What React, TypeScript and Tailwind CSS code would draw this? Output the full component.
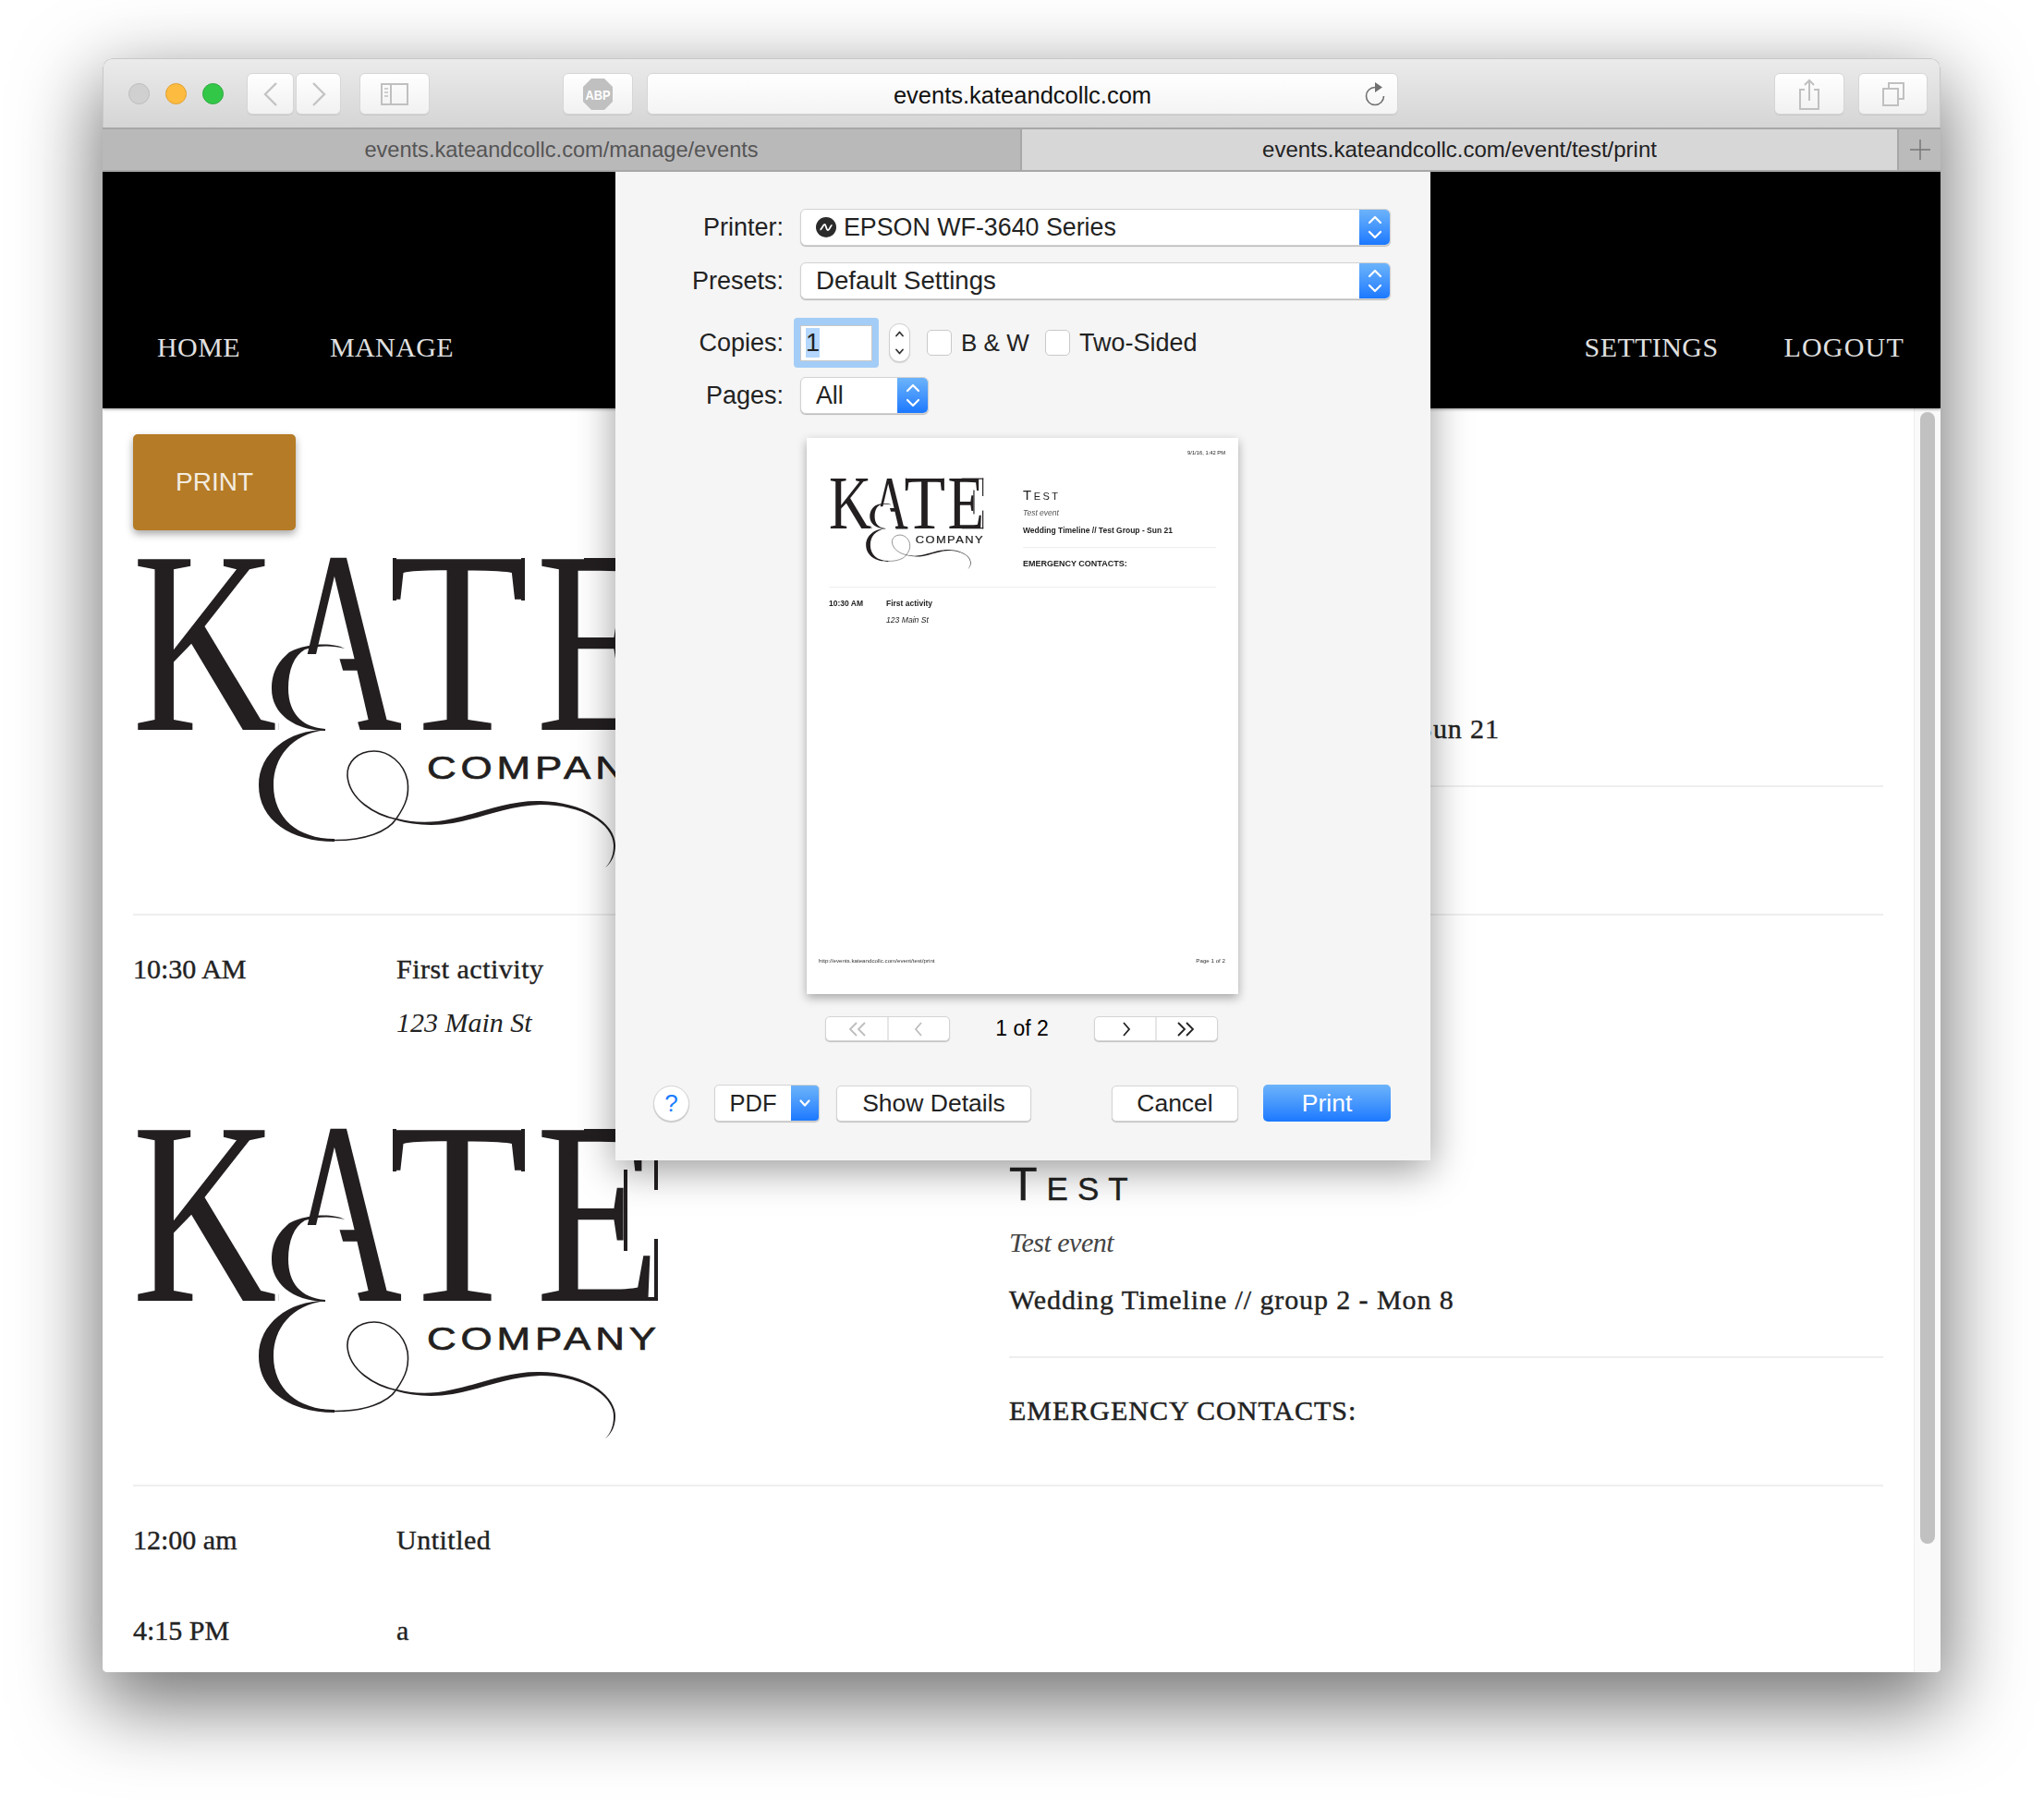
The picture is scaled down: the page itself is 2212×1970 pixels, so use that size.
import React from "react";

const Logo = ({ width, height }: { width: number; height: number }) => (
  <svg width={width} height={height} viewBox="144 602 570 340" className="block shrink-0" fill="#231f20">
    <g fontFamily="'Liberation Serif', serif" fontSize="282">
      <text transform="translate(143 790) scale(0.77 1)">K</text>
      <text transform="translate(300 790) scale(0.665 1)">A</text>
      <text transform="translate(421 790) scale(0.86 1)">T</text>
      <text transform="translate(580 790) scale(0.78 1)">E</text>
    </g>
    <rect x="425" y="604" width="4" height="46" />
    <rect x="564" y="604" width="4" height="46" />
    <rect x="632" y="604" width="80" height="4" />
    <rect x="632" y="786" width="80" height="4" />
    <rect x="675" y="648" width="4" height="88" />
    <rect x="708" y="604" width="4" height="66" />
    <rect x="708" y="723" width="4" height="67" />
    <polygon points="302,708 366,708 391,795 302,795" fill="#ffffff" />
    <path d="M373 702C362 696 335 695 313 706C303 715 294 725 294 746C294 770 315 790 352 791L352 789C325 787 312 770 312 745C312 725 318 710 330 703C345 698 362 699 373 702Z" />
    <path d="M352 790C312 790 280 815 280 850C280 888 315 911 362 911L362 908C322 908 296 885 296 850C296 820 315 795 352 790Z" />
    <path d="M360 909.5C395 910 420 900 429 886C440 870 443 860 441 845C437 825 420 813 405 813C387 813 375 825 376 840C378 865 405 882 430 887" fill="none" stroke="#231f20" strokeWidth="1.6" />
    <path d="M430 886C445 890 465 892 490 886C520 880 550 866 585 867C630 868 666 890 666 915C666 925 662 934 655 939C661 933 664 925 664 915C664 892 630 871 585 871C550 872 520 886 490 891C465 895 445 892 430 888Z" />
    <text transform="translate(462 843) scale(1.22 1)" fontFamily="'Liberation Sans', sans-serif" fontSize="36" letterSpacing="4" stroke="#231f20" strokeWidth="0.7">COMPANY</text>
  </svg>
);

const Section = ({ group, rows, padBottom }: { group: string; rows: React.ReactNode; padBottom: string }) => (
  <section className={padBottom}>
    <div className="flex h-[389px] border-b-2 border-[#eeeeee]">
      <div className="w-[948px] shrink-0">
        <Logo width={570} height={340} />
      </div>
      <div className="flex-1">
        <h2 className="mt-[37px] h-[50px] text-[50px] leading-[50px] tracking-[10px] [font-variant:small-caps] [-webkit-text-stroke:0.4px_#222] [font-family:'Liberation_Sans',sans-serif] text-[#222]">Test</h2>
        <p className="mt-[18px] h-[40px] text-[30px] leading-[40px] italic tracking-[-0.5px] text-[#444]">Test event</p>
        <p className="mt-[22px] h-[40px] text-[30px] leading-[40px] tracking-[0.9px] [-webkit-text-stroke:0.4px_#222]">{group}</p>
        <div className="mt-[41px] h-[2px] bg-[#eeeeee]" />
        <p className="mt-[37px] h-[40px] text-[30px] leading-[40px] tracking-[1px] [-webkit-text-stroke:0.5px_#222]">EMERGENCY CONTACTS:</p>
      </div>
    </div>
    {rows}
  </section>
);

const Row = ({ time, title, className }: { time: string; title: string; className: string }) => (
  <div className={`flex h-[40px] text-[30px] leading-[40px] [-webkit-text-stroke:0.4px_#222] ${className}`}>
    <div className="w-[285px] shrink-0">{time}</div>
    <div className="tracking-[0.5px]">{title}</div>
  </div>
);

const Stepper = () => (
  <svg width="16" height="30" viewBox="0 0 16 30" fill="none" stroke="#fff" strokeWidth="2.2" strokeLinecap="round" strokeLinejoin="round">
    <path d="M2 10L8 4L14 10" />
    <path d="M2 20L8 26L14 20" />
  </svg>
);

const Popup = ({ children, className }: { children: React.ReactNode; className: string }) => (
  <div className={`flex h-[40px] items-stretch overflow-hidden rounded-[6px] border border-[#d2d2d2] bg-white shadow-[0_1px_1px_rgba(0,0,0,0.25)] ${className}`}>
    <div className="flex flex-1 items-center gap-[8px] pl-[16px]">{children}</div>
    <div className="flex w-[33px] items-center justify-center bg-gradient-to-b from-[#6cb3fa] to-[#1a78ff]">
      <Stepper />
    </div>
  </div>
);

const Label = ({ children }: { children: string }) => (
  <div className="w-[182px] shrink-0 text-right text-[27px]">{children}</div>
);

const Btn = ({ children, className }: { children: string; className: string }) => (
  <div className={`flex h-[39px] items-center justify-center rounded-[5px] border border-[#d4d4d4] bg-white text-[26.5px] shadow-[0_1px_1px_rgba(0,0,0,0.22)] ${className}`}>
    {children}
  </div>
);

const ToolBtn = ({ children, className }: { children: React.ReactNode; className: string }) => (
  <div className={`flex h-[45px] items-center justify-center rounded-[6px] border border-[#d6d6d6] bg-gradient-to-b from-[#ffffff] to-[#f1f1f1] shadow-[0_1px_0_rgba(0,0,0,0.08)] ${className}`}>
    {children}
  </div>
);

const Chev = ({ d, color }: { d: string; color: string }) => (
  <svg width="34" height="20" viewBox="0 0 34 20" fill="none" stroke={color} strokeWidth="1.8">
    <path d={d} />
  </svg>
);

const MiniPage = () => (
  <div className="ml-[207px] mt-[26px] flex h-[602px] w-[467px] flex-col bg-white pt-[12px] text-[#222] shadow-[0_4px_10px_rgba(0,0,0,0.32)] blur-[0.3px]">
    <div className="h-[8px] pr-[14px] text-right text-[5.8px] leading-[8px] [font-family:'Liberation_Sans',sans-serif]">9/1/16, 1:42 PM</div>
    <div className="ml-[24px] mr-[24px] mt-[23px] flex h-[119px] border-b border-[#eeeeee]">
      <Logo width={168} height={100} />
      <div className="ml-[42px] flex-1">
        <div className="mt-[12px] h-[14px] text-[15px] leading-[14px] tracking-[2.5px] [font-variant:small-caps] [font-family:'Liberation_Sans',sans-serif]">Test</div>
        <div className="mt-[6px] h-[12px] text-[8.5px] leading-[12px] italic text-[#555]">Test event</div>
        <div className="mt-[7px] h-[12px] text-[8.5px] font-bold leading-[12px]">Wedding Timeline // Test Group - Sun 21</div>
        <div className="mt-[12px] h-px bg-[#eeeeee]" />
        <div className="mt-[11px] h-[12px] text-[9px] font-bold leading-[12px]">EMERGENCY CONTACTS:</div>
      </div>
    </div>
    <div className="ml-[24px] mt-[11px] flex h-[12px] text-[8.5px] font-bold leading-[12px]">
      <div className="w-[62px]">10:30 AM</div>
      <div>First activity</div>
    </div>
    <div className="ml-[86px] mt-[6px] h-[12px] text-[8.6px] italic leading-[12px]">123 Main St</div>
    <div className="mb-[32px] mt-auto flex h-[8px] justify-between pl-[13px] pr-[14px] text-[6.2px] leading-[8px] text-[#333] [font-family:'Liberation_Sans',sans-serif]">
      <span>http://events.kateandcollc.com/event/test/print</span>
      <span>Page 1 of 2</span>
    </div>
  </div>
);

const Dialog = () => (
  <div className="absolute left-[555px] top-0 z-20 h-[1070px] w-[882px] bg-[#f5f5f5] pt-[40px] text-[26.8px] leading-[40px] text-[#222] shadow-[0_10px_40px_rgba(0,0,0,0.4)] [font-family:'Liberation_Sans',sans-serif]">
    <div className="flex h-[40px] items-center">
      <Label>Printer:</Label>
      <Popup className="ml-[18px] w-[639px]">
        <svg width="22" height="22" viewBox="0 0 22 22">
          <circle cx="11" cy="11" r="11" fill="#2b2b2b" />
          <path d="M4.5 13.5C6.5 13.5 7.5 8 9.5 8C11 8 11 14 13 14C15 14 15.5 9 17.5 8.5" fill="none" stroke="#fff" strokeWidth="1.8" />
        </svg>
        <span>EPSON WF-3640 Series</span>
      </Popup>
    </div>
    <div className="mt-[18px] flex h-[40px] items-center">
      <Label>Presets:</Label>
      <Popup className="ml-[18px] w-[639px]">
        <span className="text-[27.6px]">Default Settings</span>
      </Popup>
    </div>
    <div className="mt-[20px] flex h-[54px] items-center">
      <Label>Copies:</Label>
      <div className="ml-[11px] flex h-[54px] w-[92px] items-center justify-center rounded-[4px] bg-[#a3cdf7]">
        <div className="flex h-[39px] w-[78px] items-center border border-[#c8c8c8] bg-white pl-[5px] text-[27px]">
          <span className="bg-[#b3d7ff] leading-[32px]">1</span>
        </div>
      </div>
      <div className="ml-[11px] flex h-[42px] w-[23px] items-center justify-center rounded-[11px] border border-[#cfcfcf] bg-white shadow-[0_1px_1px_rgba(0,0,0,0.15)]">
        <svg width="13" height="28" viewBox="0 0 13 28" fill="none" stroke="#333" strokeWidth="1.8" strokeLinecap="round" strokeLinejoin="round">
          <path d="M3 6.5L6.5 2.5L10 6.5" />
          <path d="M3 21.5L6.5 25.5L10 21.5" />
        </svg>
      </div>
      <div className="ml-[18px] h-[28px] w-[27px] rounded-[5px] border border-[#c9c9c9] bg-white" />
      <span className="ml-[10px] w-[91px] shrink-0 text-[26px]">B &amp; W</span>
      <div className="h-[28px] w-[27px] rounded-[5px] border border-[#c9c9c9] bg-white" />
      <span className="ml-[10px] text-[27px]">Two-Sided</span>
    </div>
    <div className="mt-[10px] flex h-[40px] items-center">
      <Label>Pages:</Label>
      <Popup className="ml-[18px] w-[139px]">
        <span>All</span>
      </Popup>
    </div>
    <MiniPage />
    <div className="mt-[24px] flex h-[27px] items-center pl-[227px]">
      <div className="flex h-[27px] w-[135px] rounded-[5px] border border-[#d4d4d4] bg-white shadow-[0_1px_1px_rgba(0,0,0,0.22)]">
        <div className="flex flex-1 items-center justify-center border-r-2 border-[#e6e6e6]">
          <Chev d="M17 3L10 10L17 17M26 3L19 10L26 17" color="#bdbdbd" />
        </div>
        <div className="flex flex-1 items-center justify-center">
          <Chev d="M20 3L14 10L20 17" color="#bdbdbd" />
        </div>
      </div>
      <div className="w-[156px] text-center text-[23px] leading-[27px] text-black">1 of 2</div>
      <div className="flex h-[27px] w-[134px] rounded-[5px] border border-[#d4d4d4] bg-white shadow-[0_1px_1px_rgba(0,0,0,0.22)]">
        <div className="flex flex-1 items-center justify-center border-r-2 border-[#e6e6e6]">
          <Chev d="M15 3L21 10L15 17" color="#222" />
        </div>
        <div className="flex flex-1 items-center justify-center">
          <Chev d="M7 3L14 10L7 17M16 3L23 10L16 17" color="#222" />
        </div>
      </div>
    </div>
    <div className="mt-[47px] flex h-[40px] items-center pl-[41px]">
      <div className="flex h-[39px] w-[39px] items-center justify-center rounded-full border border-[#d4d4d4] bg-white text-[26px] text-[#1a7cff] shadow-[0_1px_1px_rgba(0,0,0,0.22)]">?</div>
      <div className="ml-[27px] flex h-[40px] w-[114px] overflow-hidden rounded-[5px] border border-[#d4d4d4] bg-white text-[25.5px] shadow-[0_1px_1px_rgba(0,0,0,0.22)]">
        <div className="flex w-[82px] items-center justify-center">PDF</div>
        <div className="flex flex-1 items-center justify-center bg-gradient-to-b from-[#6cb3fa] to-[#1a78ff]">
          <svg width="14" height="10" viewBox="0 0 14 10" fill="none" stroke="#fff" strokeWidth="2.2" strokeLinecap="round" strokeLinejoin="round">
            <path d="M2.5 2.5L7 7.5L11.5 2.5" />
          </svg>
        </div>
      </div>
      <Btn className="ml-[18px] w-[211px]">Show Details</Btn>
      <Btn className="ml-[87px] w-[137px]">Cancel</Btn>
      <div className="ml-[27px] flex h-[40px] w-[138px] items-center justify-center rounded-[5px] bg-gradient-to-b from-[#6cb3fa] to-[#1a78ff] text-[26.5px] text-white">Print</div>
    </div>
  </div>
);

export default function App() {
  return (
    <div className="h-[1970px] w-[2212px] overflow-hidden bg-white pl-[111px] pt-[63px]">
      <div className="flex h-[1747px] w-[1989px] flex-col overflow-hidden rounded-t-[10px] rounded-b-[5px] shadow-[0_30px_85px_6px_rgba(0,0,0,0.55)]">
        {/* toolbar */}
        <div className="flex h-[75px] shrink-0 items-start rounded-t-[10px] border-x border-t border-[#c8c8c8] bg-gradient-to-b from-[#ebebeb] to-[#d6d5d6] pl-[27px] pt-[15px]">
          <div className="mt-[11px] h-[23px] w-[23px] rounded-full border border-[#bdbdbd] bg-[#d0d0d0]" />
          <div className="ml-[17px] mt-[11px] h-[23px] w-[23px] rounded-full border border-[#e0a030] bg-[#fdbb40]" />
          <div className="ml-[17px] mt-[11px] h-[23px] w-[23px] rounded-full border border-[#2cab3e] bg-[#33c748]" />
          <ToolBtn className="ml-[25px] w-[51px]">
            <svg width="18" height="28" viewBox="0 0 18 28" fill="none" stroke="#c4c4c4" strokeWidth="2.4"><path d="M15 2L3 14L15 26" /></svg>
          </ToolBtn>
          <ToolBtn className="ml-[2px] w-[49px]">
            <svg width="18" height="28" viewBox="0 0 18 28" fill="none" stroke="#c4c4c4" strokeWidth="2.4"><path d="M3 2L15 14L3 26" /></svg>
          </ToolBtn>
          <ToolBtn className="ml-[20px] w-[76px]">
            <svg width="30" height="24" viewBox="0 0 30 24" fill="none" stroke="#c0c0c0" strokeWidth="2">
              <rect x="1" y="1" width="28" height="22" />
              <path d="M11 1V23" />
              <path d="M4 6H8M4 10H8M4 14H8" strokeWidth="1.5" />
            </svg>
          </ToolBtn>
          <ToolBtn className="ml-[144px] w-[76px]">
            <svg width="34" height="36" viewBox="0 0 34 36">
              <polygon points="10,1 24,1 33,10 33,26 24,35 10,35 1,26 1,10" fill="#c0c0c0" />
              <text x="17" y="24" textAnchor="middle" fill="#fff" fontSize="15" fontWeight="700" fontFamily="'Liberation Sans', sans-serif" textLength="27" lengthAdjust="spacingAndGlyphs">ABP</text>
            </svg>
          </ToolBtn>
          <div className="relative ml-[15px] flex h-[45px] w-[813px] items-center justify-center rounded-[6px] border border-[#d6d6d6] bg-gradient-to-b from-[#ffffff] to-[#f4f4f4] pt-[3px] text-[25.5px] text-[#111] shadow-[0_1px_0_rgba(0,0,0,0.08)] [font-family:'Liberation_Sans',sans-serif]">
            events.kateandcollc.com
            <svg className="absolute right-[12px] top-[8px]" width="24" height="28" viewBox="0 0 24 28" fill="none">
              <path d="M12 6.5A9.5 9.5 0 1 0 21.5 16" stroke="#707070" strokeWidth="1.6" />
              <path d="M12 1L20 6.5L12 12Z" fill="#707070" />
            </svg>
          </div>
          <ToolBtn className="ml-[407px] w-[76px]">
            <svg width="22" height="34" viewBox="0 0 22 34" fill="none" stroke="#c0c0c0" strokeWidth="2">
              <path d="M6 12H1V33H21V12H16" />
              <path d="M11 24V2M6 7L11 2L16 7" />
            </svg>
          </ToolBtn>
          <ToolBtn className="ml-[15px] w-[75px]">
            <svg width="24" height="26" viewBox="0 0 24 26" fill="none" stroke="#c0c0c0" strokeWidth="2">
              <rect x="1" y="7" width="16" height="18" />
              <path d="M7 7V1H23V18H17" />
            </svg>
          </ToolBtn>
        </div>
        {/* tabs */}
        <div className="flex h-[48px] shrink-0 border-y-2 border-[#a8a7a8] text-[24px] leading-[44px] [font-family:'Liberation_Sans',sans-serif]">
          <div className="w-[993px] bg-[#bab9ba] text-center text-[23.6px] text-[#555]">events.kateandcollc.com/manage/events</div>
          <div className="flex-1 border-l-2 border-[#a8a7a8] bg-[#d8d7d8] text-center text-[#222]">events.kateandcollc.com/event/test/print</div>
          <div className="flex w-[47px] items-center justify-center border-l-2 border-[#a8a7a8] bg-[#bcbbbc]">
            <svg width="22" height="22" viewBox="0 0 22 22" stroke="#777" strokeWidth="1.5"><path d="M11 0V22M0 11H22" /></svg>
          </div>
        </div>
        {/* page */}
        <div className="relative flex min-h-0 flex-1 flex-col overflow-hidden bg-white [font-family:'Liberation_Serif',serif] text-[#222]">
          <header className="relative z-10 flex h-[256px] shrink-0 items-start bg-black pt-[170px] text-[30px] leading-[40px] tracking-[0.4px] text-[#e0e0e0] shadow-[0_1px_3px_rgba(0,0,0,0.4)]">
            <span className="ml-[59px]">HOME</span>
            <span className="ml-[97px]">MANAGE</span>
            <span className="ml-auto">SETTINGS</span>
            <span className="ml-[71px] mr-[39px] tracking-[1.2px]">LOGOUT</span>
          </header>
          <div className="flex min-h-0 flex-1">
            <main className="min-w-0 flex-1 pl-[33px] pr-[33px] pt-[28px]">
              <div className="flex h-[104px] w-[176px] items-center justify-center rounded-[5px] bg-[#b57b26] text-[28px] text-[#f3ece0] shadow-[0_4px_8px_rgba(0,0,0,0.35)] [font-family:'Liberation_Sans',sans-serif]">PRINT</div>
              <div className="mt-[28px]">
                <Section
                  group="Wedding Timeline // Test Group - Sun 21"
                  padBottom="pb-[93px]"
                  rows={
                    <>
                      <Row time="10:30 AM" title="First activity" className="mt-[38px]" />
                      <div className="ml-[285px] mt-[18px] h-[40px] text-[30px] italic leading-[40px]">123 Main St</div>
                    </>
                  }
                />
                <Section
                  group="Wedding Timeline // group 2 - Mon 8"
                  padBottom=""
                  rows={
                    <>
                      <Row time="12:00 am" title="Untitled" className="mt-[38px]" />
                      <Row time="4:15 PM" title="a" className="mt-[58px]" />
                    </>
                  }
                />
              </div>
            </main>
            <aside className="w-[29px] shrink-0 border-l border-[#eeeeee] bg-[#fafafa] pl-[6px] pt-[4px]">
              <div className="h-[1225px] w-[16px] rounded-full bg-[#c1c1c1]" />
            </aside>
          </div>
          <Dialog />
        </div>
      </div>
    </div>
  );
}
